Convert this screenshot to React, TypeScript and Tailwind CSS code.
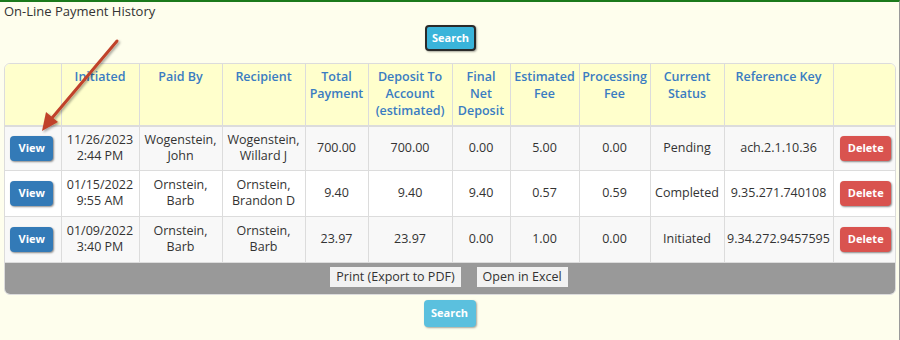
import React from 'react'

interface Payment {
  date: string
  time: string
  paidBy: [string, string]
  recipient: [string, string]
  total: string
  deposit: string
  finalNet: string
  estFee: string
  procFee: string
  status: string
  refKey: string
}

const payments: Payment[] = [
  {
    date: '11/26/2023',
    time: '2:44 PM',
    paidBy: ['Wogenstein,', 'John'],
    recipient: ['Wogenstein,', 'Willard J'],
    total: '700.00',
    deposit: '700.00',
    finalNet: '0.00',
    estFee: '5.00',
    procFee: '0.00',
    status: 'Pending',
    refKey: 'ach.2.1.10.36',
  },
  {
    date: '01/15/2022',
    time: '9:55 AM',
    paidBy: ['Ornstein,', 'Barb'],
    recipient: ['Ornstein,', 'Brandon D'],
    total: '9.40',
    deposit: '9.40',
    finalNet: '9.40',
    estFee: '0.57',
    procFee: '0.59',
    status: 'Completed',
    refKey: '9.35.271.740108',
  },
  {
    date: '01/09/2022',
    time: '3:40 PM',
    paidBy: ['Ornstein,', 'Barb'],
    recipient: ['Ornstein,', 'Barb'],
    total: '23.97',
    deposit: '23.97',
    finalNet: '0.00',
    estFee: '1.00',
    procFee: '0.00',
    status: 'Initiated',
    refKey: '9.34.272.9457595',
  },
]

const widths = [56, 78, 83, 83, 63, 84, 58, 69, 71, 74, 109, 63]

const headers: React.ReactNode[] = [
  '',
  'Initiated',
  'Paid By',
  'Recipient',
  <>Total<br />Payment</>,
  <>Deposit To<br />Account<br />(estimated)</>,
  <>Final<br />Net<br />Deposit</>,
  <>Estimated<br />Fee</>,
  <>Processing<br />Fee</>,
  <>Current<br />Status</>,
  'Reference Key',
  '',
]

function Arrow() {
  // red annotation arrow pointing at the first View button
  return (
    <svg className="absolute left-0 top-0 pointer-events-none" width="160" height="150">
      <defs>
        <filter id="sh" x="-20%" y="-20%" width="140%" height="140%">
          <feDropShadow dx="1.5" dy="1.5" stdDeviation="1.2" floodColor="#000" floodOpacity="0.35" />
        </filter>
      </defs>
      <g filter="url(#sh)">
        <line x1="117" y1="39" x2="52" y2="116" stroke="#c0432b" strokeWidth="3" strokeLinecap="round" />
        <polygon points="42,129 46,110 58,120" fill="#c0432b" />
      </g>
    </svg>
  )
}

export default function App() {
  return (
    <div
      className="relative w-[900px] h-[340px] bg-[#fefeed] border-t-2 border-t-[#1b7a1b] border-r border-r-[#9a9a9a] text-[#333] text-[12.5px] overflow-hidden"
      style={{ fontFamily: '"Open Sans", "Liberation Sans", sans-serif' }}
    >
      <div className="pl-1 leading-[18px] text-[13px]">On-Line Payment History</div>

      <div className="flex justify-center mt-[5px] pl-[2px]">
        <button className="w-[51px] h-[26px] rounded-[4px] bg-[#3ab4da] border-2 border-[#2a2a2a] text-white text-[11px] font-bold shadow-[1px_1px_2px_rgba(0,0,0,0.35)]">
          Search
        </button>
      </div>

      <div className="mt-[12px] mx-1 w-[892px] border border-[#dcdcdc] rounded-[6px] overflow-hidden bg-white">
        <table className="table-fixed border-collapse w-full">
          <colgroup>
            {widths.map((w, i) => (
              <col key={i} style={{ width: w }} />
            ))}
          </colgroup>
          <thead>
            <tr className="bg-[#ffffcc] h-[62px] border-b-2 border-[#dcdcdc]">
              {headers.map((h, i) => (
                <th
                  key={i}
                  className={`align-top text-center font-semibold text-[#3a7cc2] leading-[17px] pt-[4px] px-0 ${i < 11 ? 'border-r border-[#dcdcdc]' : ''}`}
                >
                  {h}
                </th>
              ))}
            </tr>
          </thead>
          <tbody>
            {payments.map((p, i) => (
              <tr
                key={i}
                className={`${i % 2 === 0 ? 'bg-[#f8f8f8]' : 'bg-white'} ${i === 0 ? 'h-[44px]' : 'h-[46px]'} border-b border-[#dcdcdc] text-center leading-[16px]`}
              >
                <td className="border-r border-[#dcdcdc]">
                  <div className="flex justify-center pr-[2px]">
                    <button className="w-[43px] h-[25px] rounded-[4px] bg-[#337ab7] text-white text-[11px] font-bold shadow-[1px_1px_2px_rgba(0,0,0,0.45)]">
                      View
                    </button>
                  </div>
                </td>
                <td className="border-r border-[#dcdcdc]">
                  {p.date}
                  <br />
                  {p.time}
                </td>
                <td className="border-r border-[#dcdcdc]">
                  {p.paidBy[0]}
                  <br />
                  {p.paidBy[1]}
                </td>
                <td className="border-r border-[#dcdcdc]">
                  {p.recipient[0]}
                  <br />
                  {p.recipient[1]}
                </td>
                <td className="border-r border-[#dcdcdc]">{p.total}</td>
                <td className="border-r border-[#dcdcdc]">{p.deposit}</td>
                <td className="border-r border-[#dcdcdc]">{p.finalNet}</td>
                <td className="border-r border-[#dcdcdc]">{p.estFee}</td>
                <td className="border-r border-[#dcdcdc]">{p.procFee}</td>
                <td className="border-r border-[#dcdcdc]">{p.status}</td>
                <td className="border-r border-[#dcdcdc] whitespace-nowrap">{p.refKey}</td>
                <td>
                  <div className="flex justify-center pl-[2px]">
                    <button className="w-[51px] h-[25px] rounded-[4px] bg-[#d9534f] text-white text-[11px] font-bold shadow-[1px_1px_2px_rgba(0,0,0,0.45)]">
                      Delete
                    </button>
                  </div>
                </td>
              </tr>
            ))}
          </tbody>
        </table>
        <div className="h-[31px] bg-[#999999] flex items-center justify-center gap-4 pb-[2px] pr-[2px]">
          <button className="h-[20px] px-[6px] bg-[#f2f2f2] text-[#333] text-[12.5px] leading-[20px]">
            Print (Export to PDF)
          </button>
          <button className="h-[20px] px-[6px] bg-[#f2f2f2] text-[#333] text-[12.5px] leading-[20px]">
            Open in Excel
          </button>
        </div>
      </div>

      <div className="flex justify-center mt-[5px]">
        <button className="w-[52px] h-[27px] rounded-[4px] bg-[#5bc0de] text-white text-[11px] font-bold shadow-[1px_1px_2px_rgba(0,0,0,0.35)]">
          Search
        </button>
      </div>

      <Arrow />
    </div>
  )
}
